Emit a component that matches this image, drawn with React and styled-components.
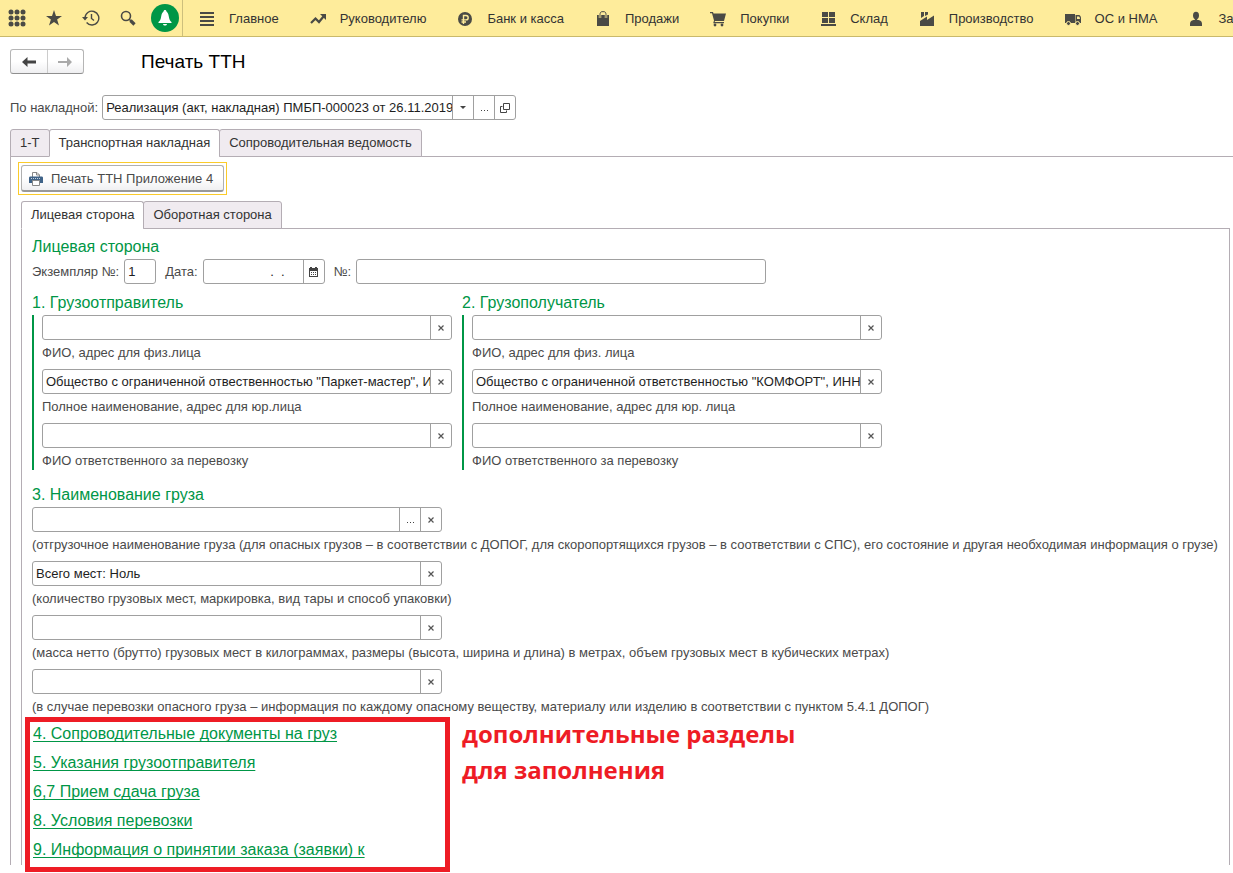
import React, { useState } from 'react';
import styled, { createGlobalStyle } from 'styled-components';

const GlobalStyle = createGlobalStyle`
  * {
    box-sizing: border-box;
  }
  body {
    margin: 0;
    background-color: #fff;
    color: #4a4a4a;
    font-family: 'Liberation Sans', Arial, sans-serif;
    font-size: 13px;
    line-height: 18px;
  }
  button,
  input {
    font: inherit;
    color: inherit;
  }
  button {
    padding: 0;
    cursor: pointer;
  }
`;

const Page = styled.div`
  padding-bottom: 9px;
  overflow-x: hidden;
`;

const TopBar = styled.header`
  display: flex;
  height: 37px;
  background-color: #feec9b;
  border-bottom: 1px solid #c9b96c;
  overflow: hidden;
`;

const Tools = styled.div`
  display: flex;
  flex: none;
  align-items: center;
  gap: 10px;
  padding: 0 3px;
  border-right: 1px solid #cdbf7c;
`;

const ToolButton = styled.button`
  display: flex;
  align-items: center;
  justify-content: center;
  width: ${(props) => (props.$round ? '28px' : '27px')};
  height: 28px;
  border: none;
  border-radius: 50%;
  background-color: ${(props) => (props.$round ? '#009646' : 'transparent')};
`;

const Menu = styled.nav`
  display: flex;
  align-items: center;
  gap: 31px;
  padding-top: 1px;
  padding-left: 16px;
`;

const MenuLink = styled.a`
  display: flex;
  flex: none;
  align-items: center;
  gap: 14px;
  color: #333;
  text-decoration: none;
  white-space: nowrap;
`;

const TitleRow = styled.div`
  display: flex;
  align-items: center;
  gap: 57px;
  padding: 12px 10px 0;
`;

const History = styled.div`
  display: flex;
  width: 74px;
  height: 25px;
  border: 1px solid #b5b5b5;
  border-bottom-color: #8f8f8f;
  border-radius: 3px;
  background: linear-gradient(#fff 50%, #efeff1);
`;

const HistoryButton = styled.button`
  display: flex;
  flex: 1;
  align-items: center;
  justify-content: center;
  border: none;
  background-color: transparent;
  & + & {
    border-left: 1px solid #ccc;
  }
`;

const Title = styled.h1`
  margin: 0;
  color: #000;
  font-size: 19px;
  font-weight: 400;
  line-height: 24px;
`;

const DocumentRow = styled.div`
  display: flex;
  align-items: center;
  gap: 4px;
  padding: 21px 10px 9px;
`;

const Field = styled.div`
  display: flex;
  flex: none;
  width: ${(props) => props.$width || '410px'};
  max-width: 100%;
  height: 25px;
  border: 1px solid #a0a0a0;
  border-radius: 3px;
  background-color: #fff;
`;

const Input = styled.input`
  flex: 1;
  min-width: 0;
  padding: 0 ${(props) => (props.$date ? '18px' : '0')} 0 3px;
  border: none;
  outline: none;
  background-color: transparent;
  color: #1e1e1e;
  text-align: ${(props) => (props.$date ? 'right' : 'left')};
`;

const FieldButton = styled.button`
  display: flex;
  flex: none;
  align-items: center;
  justify-content: center;
  width: 21px;
  border: none;
  border-left: 1px solid #a0a0a0;
  background-color: transparent;
`;

const Tabs = styled.div`
  display: flex;
  height: 28px;
  margin-bottom: -1px;
`;

const Tab = styled.button`
  padding: 0 9px;
  border: 1px solid #b4adb4;
  border-bottom-color: ${(props) => (props.$active ? '#fff' : '#b4adb4')};
  border-radius: 3px 3px 0 0;
  background-color: ${(props) => (props.$active ? '#fff' : '#f0ebf0')};
  color: #333;
  white-space: nowrap;
  & + & {
    margin-left: -1px;
  }
`;

const TabArea = styled.div`
  padding-left: 10px;
`;

const Panel = styled.main`
  padding: 5px 3px 0 7px;
  border-top: 1px solid #b4adb4;
  border-left: 1px solid #b4adb4;
`;

const Highlight = styled.div`
  display: inline-flex;
  padding: 2px;
  border: 1px solid #fbcb2b;
`;

const PrintButton = styled.button`
  display: flex;
  align-items: center;
  gap: 8px;
  height: 27px;
  padding: 1px 10px 0 7px;
  border: 1px solid #b0b0b0;
  border-bottom: 2px solid #999;
  border-radius: 3px;
  background: linear-gradient(#fff 50%, #f0f0f2);
  white-space: nowrap;
`;

const InnerArea = styled.section`
  padding: 6px 0 0 3px;
`;

const InnerPanel = styled.div`
  padding: 8px 10px 5px;
  border: 1px solid #b4adb4;
  border-bottom: none;
`;

const Heading = styled.h2`
  margin: 0 0 2px;
  color: #009646;
  font-size: 16px;
  font-weight: 400;
  line-height: 20px;
`;

const FormRow = styled.div`
  display: flex;
  align-items: center;
  margin-bottom: 9px;
`;

const InlineField = styled.div`
  display: flex;
  align-items: center;
  gap: 5px;
  margin-right: 9px;
`;

const Parties = styled.div`
  display: flex;
  gap: 10px;
  margin-bottom: 15px;
`;

const PartyFields = styled.div`
  padding-left: 8px;
  border-left: 2px solid #009646;
`;

const Stack = styled.div`
  display: flex;
  flex-direction: column;
  gap: 7px;
`;

const Hint = styled.label`
  display: block;
  margin-top: 4px;
  white-space: nowrap;
`;

const Sections = styled.div`
  position: relative;
  display: flex;
  flex-direction: column;
  align-items: flex-start;
  gap: 9px;
  margin-top: 8px;
  padding-left: 1px;
`;

const SectionLink = styled.a`
  color: #009646;
  font-size: 16px;
  line-height: 20px;
  text-decoration: underline;
  text-decoration-skip-ink: none;
  text-underline-offset: 2px;
`;

const Frame = styled.div`
  position: absolute;
  top: -7px;
  bottom: -12px;
  left: -7px;
  width: 425px;
  border: 5px solid #ee1c25;
  pointer-events: none;
`;

const Note = styled.p`
  position: absolute;
  top: -8px;
  left: 430px;
  margin: 0;
  color: #ee1c25;
  font-family: 'Open Sans', 'Noto Sans', sans-serif;
  font-size: 24px;
  font-weight: 700;
  line-height: 36px;
  white-space: nowrap;
`;

const Svg = ({ size = 16, children }) => (
  <svg width={size} height={size} viewBox={`0 0 ${size} ${size}`} fill="#4a4a45" aria-hidden="true">
    {children}
  </svg>
);

const GridIcon = () => (
  <Svg size={18}>
    {[3, 9, 15].map((y) => [3, 9, 15].map((x) => <circle key={`${x}-${y}`} cx={x} cy={y} r="2.5" />))}
  </Svg>
);

const StarIcon = () => (
  <Svg size={16}>
    <path d="M8 0l2 5.9h6l-4.900 3.700 1.900 6L8 12l-5 3.600 1.900-6L0 5.900h6z" />
  </Svg>
);

const HistoryIcon = () => (
  <Svg size={18}>
    <path d="M3 9a6.900 6.900 0 1 1 1.600 4.500" fill="none" stroke="#4a4a45" strokeWidth="1.400" />
    <path d="M0 8h6L3 11.500z" />
    <path d="M9.500 5v4.500l2.500 2" fill="none" stroke="#4a4a45" strokeWidth="1.400" />
  </Svg>
);

const SearchIcon = () => (
  <Svg size={16}>
    <circle cx="6" cy="6" r="4.500" fill="none" stroke="#4a4a45" strokeWidth="1.600" />
    <path d="M9 9l2 2" stroke="#4a4a45" strokeWidth="1.600" />
    <path d="M10.500 10.500l4 4" stroke="#4a4a45" strokeWidth="3.200" />
  </Svg>
);

const BellIcon = () => (
  <Svg size={16}>
    <path
      fill="#fff"
      d="M8 0c.9 0 1.400.6 1.500 1.500C11.200 2.800 11.600 5 12 7.500c.4 2.300 1.200 3.500 2.500 4.500v1h-13v-1C2.800 11 3.600 9.800 4 7.500c.4-2.500.8-4.700 2.500-6C6.600.6 7.100 0 8 0zM6 14h4c-.2 1-1 1.500-2 1.500S6.200 15 6 14z"
    />
  </Svg>
);

const MainIcon = () => (
  <Svg>
    <path d="M1 1h14v2H1zM1 5h14v2H1zM1 9h14v2H1zM1 13h14v2H1z" />
  </Svg>
);

const TrendIcon = () => (
  <Svg>
    <path d="M1 12l4.500-4.500L9 11l4.500-5.500" fill="none" stroke="#4a4a45" strokeWidth="2.200" />
    <path d="M10 3h6v6z" />
  </Svg>
);

const RubleIcon = () => (
  <Svg>
    <circle cx="8" cy="8" r="7" />
    <path d="M6.500 13V4.500H9a2.200 2.200 0 0 1 0 4.400H4.500M4.500 11H9" fill="none" stroke="#feec9b" strokeWidth="1.400" />
  </Svg>
);

const BagIcon = () => (
  <Svg>
    <path d="M2 4h12v11H2z" />
    <path d="M5 7V3.500C5 1.500 6 .7 7 .7h2c1 0 2 .8 2 2.800V7" fill="none" stroke="#feec9b" strokeWidth="2.400" />
    <path d="M5 7V3.500C5 1.500 6 .7 7 .7h2c1 0 2 .8 2 2.800V7" fill="none" stroke="#4a4a45" />
  </Svg>
);

const CartIcon = () => (
  <Svg>
    <path d="M0 1h3l.5 1.500H16L14 10H5l-.4 1H14v1.300H3.200L4 9.500 2 2.300H0z" />
    <circle cx="5" cy="14" r="1.400" />
    <circle cx="12" cy="14" r="1.400" />
  </Svg>
);

const StoreIcon = () => (
  <Svg>
    <path d="M2 1h6v5H2zM9 1h6v5H9zM2 7h6v5H2zM9 7h6v5H9zM1 13h15v2H1z" />
  </Svg>
);

const FactoryIcon = () => (
  <Svg>
    <path d="M1 15V10l7-4.500V9l7-4.500V15z" />
    <path d="M2 1h3v4L2 7zM6 1h3v2.500L6 5z" />
  </Svg>
);

const TruckIcon = () => (
  <Svg>
    <path d="M0 3h10v9H0zM10.500 4h3.500c1 0 2 1.500 2 3v5h-5.500z" />
    <path d="M12 5.500h2c.6.600 1 1.500 1 2.500h-3z" fill="#feec9b" />
    <circle cx="3.500" cy="12.500" r="2" stroke="#feec9b" />
    <circle cx="12.500" cy="12.500" r="2" stroke="#feec9b" />
  </Svg>
);

const PersonIcon = () => (
  <Svg>
    <ellipse cx="8" cy="4.500" rx="3" ry="3.700" />
    <path d="M5.500 9h5c2.300.5 3.500 1.700 3.500 4v2H2v-2c0-2.300 1.200-3.500 3.500-4z" />
    <path d="M6.800 7h2.400v3H6.800z" />
  </Svg>
);

const ArrowIcon = ({ forward }) => (
  <svg width="14" height="10" viewBox="0 0 14 10" fill={forward ? '#aaa' : '#444'} aria-hidden="true">
    <path d={forward ? 'M0 4h9V0l5 5-5 5V6H0z' : 'M14 3.500H5.500V0L0 5l5.500 5V6.500H14z'} />
  </svg>
);

const PrinterIcon = () => (
  <Svg size={14}>
    <path d="M3.500 5V.5h4.500l2.500 2.500v2" fill="#fff" stroke="#888" />
    <path d="M7.500.5V3h3" fill="none" stroke="#888" />
    <path d="M0 6c0-1 .5-1.500 1.500-1.500h11c1 0 1.500.5 1.500 1.500v5H0z" fill="#3f6388" />
    <path d="M2 6.500h10" stroke="#c5d3e0" strokeDasharray="1 1" />
    <path d="M3.500 8.500h7v5h-7z" fill="#fff" stroke="#888" />
  </Svg>
);

const DropIcon = () => (
  <svg width="6" height="3" viewBox="0 0 6 3" fill="#444" aria-hidden="true">
    <path d="M0 0h6L3 3z" />
  </svg>
);

const DotsIcon = () => (
  <svg width="9" height="9" viewBox="0 0 9 9" fill="#444" aria-hidden="true">
    <path d="M1 7h1v1H1zM4 7h1v1H4zM7 7h1v1H7z" />
  </svg>
);

const OpenIcon = () => (
  <svg width="10" height="10" viewBox="0 0 10 10" fill="none" stroke="#444" aria-hidden="true">
    <path d="M3.500.5h6v6h-6zM2.500 3.500h-2v6h6v-2" />
  </svg>
);

const ClearIcon = () => (
  <svg width="6" height="6" viewBox="0 0 6 6" fill="none" stroke="#555" strokeWidth="1.200" aria-hidden="true">
    <path d="M.5.5l5 5M5.500.5l-5 5" />
  </svg>
);

const CalendarIcon = () => (
  <svg width="9" height="10" viewBox="0 0 9 10" fill="#444" aria-hidden="true">
    <path d="M1 0h2v1h3V0h2v1h1v9H0V1h1zM1 4v5h7V4z" fillRule="evenodd" />
    <path d="M2 5h1v1H2zM4 5h1v1H4zM6 5h1v1H6zM2 7h1v1H2zM4 7h1v1H4zM6 7h1v1H6z" />
  </svg>
);

const menu = [
  { name: 'Главное', Icon: MainIcon },
  { name: 'Руководителю', Icon: TrendIcon },
  { name: 'Банк и касса', Icon: RubleIcon },
  { name: 'Продажи', Icon: BagIcon },
  { name: 'Покупки', Icon: CartIcon },
  { name: 'Склад', Icon: StoreIcon },
  { name: 'Производство', Icon: FactoryIcon },
  { name: 'ОС и НМА', Icon: TruckIcon },
  { name: 'За', Icon: PersonIcon },
];

const parties = [
  {
    title: '1. Грузоотправитель',
    fields: [
      { id: 'sender-person', hint: 'ФИО, адрес для физ.лица' },
      {
        id: 'sender-company',
        hint: 'Полное наименование, адрес для юр.лица',
        value: 'Общество с ограниченной отвественностью "Паркет-мастер", ИНН',
      },
      { id: 'sender-manager', hint: 'ФИО ответственного за перевозку' },
    ],
  },
  {
    title: '2. Грузополучатель',
    fields: [
      { id: 'receiver-person', hint: 'ФИО, адрес для физ. лица' },
      {
        id: 'receiver-company',
        hint: 'Полное наименование, адрес для юр. лица',
        value: 'Общество с ограниченной ответственностью "КОМФОРТ", ИНН',
      },
      { id: 'receiver-manager', hint: 'ФИО ответственного за перевозку' },
    ],
  },
];

const cargo = [
  {
    id: 'cargo-name',
    select: true,
    hint: '(отгрузочное наименование груза (для опасных грузов – в соответствии с ДОПОГ, для скоропортящихся грузов – в соответствии с СПС), его состояние и другая необходимая информация о грузе)',
  },
  {
    id: 'cargo-places',
    value: 'Всего мест: Ноль',
    hint: '(количество грузовых мест, маркировка, вид тары и способ упаковки)',
  },
  {
    id: 'cargo-mass',
    hint: '(масса нетто (брутто) грузовых мест в килограммах, размеры (высота, ширина и длина) в метрах, объем грузовых мест в кубических метрах)',
  },
  {
    id: 'cargo-danger',
    hint: '(в случае перевозки опасного груза – информация по каждому опасному веществу, материалу или изделию в соответствии с пунктом 5.4.1 ДОПОГ)',
  },
];

const sections = [
  '4. Сопроводительные документы на груз',
  '5. Указания грузоотправителя',
  '6,7 Прием сдача груза',
  '8. Условия перевозки',
  '9. Информация о принятии заказа (заявки) к',
];

function HintedField({ id, value: initial = '', hint, select }) {
  const [value, setValue] = useState(initial);

  return (
    <div>
      <Field>
        <Input id={id} value={value} onChange={(e) => setValue(e.target.value)} />
        {select && (
          <FieldButton type="button" aria-label="Выбрать">
            <DotsIcon />
          </FieldButton>
        )}
        <FieldButton type="button" aria-label="Очистить" onClick={() => setValue('')}>
          <ClearIcon />
        </FieldButton>
      </Field>
      <Hint htmlFor={id}>{hint}</Hint>
    </div>
  );
}

function App() {
  return (
    <Page>
      <GlobalStyle />
      <TopBar>
        <Tools>
          <ToolButton aria-label="Меню">
            <GridIcon />
          </ToolButton>
          <ToolButton aria-label="Избранное">
            <StarIcon />
          </ToolButton>
          <ToolButton aria-label="История">
            <HistoryIcon />
          </ToolButton>
          <ToolButton aria-label="Поиск">
            <SearchIcon />
          </ToolButton>
          <ToolButton $round aria-label="Оповещения">
            <BellIcon />
          </ToolButton>
        </Tools>
        <Menu>
          {menu.map(({ name, Icon }) => (
            <MenuLink key={name} href="#">
              <Icon />
              {name}
            </MenuLink>
          ))}
        </Menu>
      </TopBar>

      <TitleRow>
        <History>
          <HistoryButton aria-label="Назад">
            <ArrowIcon />
          </HistoryButton>
          <HistoryButton aria-label="Вперед">
            <ArrowIcon forward />
          </HistoryButton>
        </History>
        <Title>Печать ТТН</Title>
      </TitleRow>

      <DocumentRow>
        <label htmlFor="document">По накладной:</label>
        <Field $width="414px">
          <Input id="document" defaultValue="Реализация (акт, накладная) ПМБП-000023 от 26.11.2019" />
          <FieldButton aria-label="Список">
            <DropIcon />
          </FieldButton>
          <FieldButton aria-label="Выбрать">
            <DotsIcon />
          </FieldButton>
          <FieldButton aria-label="Открыть">
            <OpenIcon />
          </FieldButton>
        </Field>
      </DocumentRow>

      <TabArea>
        <Tabs>
          <Tab>1-Т</Tab>
          <Tab $active>Транспортная накладная</Tab>
          <Tab>Сопроводительная ведомость</Tab>
        </Tabs>
        <Panel>
          <Highlight>
            <PrintButton>
              <PrinterIcon />
              Печать ТТН Приложение 4
            </PrintButton>
          </Highlight>

          <InnerArea>
            <Tabs>
              <Tab $active>Лицевая сторона</Tab>
              <Tab>Оборотная сторона</Tab>
            </Tabs>
            <InnerPanel>
              <Heading>Лицевая сторона</Heading>
              <FormRow>
                <InlineField>
                  <label htmlFor="copy">Экземпляр №:</label>
                  <Field $width="32px">
                    <Input id="copy" defaultValue="1" />
                  </Field>
                </InlineField>
                <InlineField>
                  <label htmlFor="date">Дата:</label>
                  <Field $width="122px">
                    <Input id="date" $date defaultValue=".  ." />
                    <FieldButton aria-label="Календарь">
                      <CalendarIcon />
                    </FieldButton>
                  </Field>
                </InlineField>
                <InlineField>
                  <label htmlFor="number">№:</label>
                  <Field>
                    <Input id="number" />
                  </Field>
                </InlineField>
              </FormRow>

              <Parties>
                {parties.map((party) => (
                  <div key={party.title}>
                    <Heading>{party.title}</Heading>
                    <PartyFields>
                      <Stack>
                        {party.fields.map((field) => (
                          <HintedField key={field.id} {...field} />
                        ))}
                      </Stack>
                    </PartyFields>
                  </div>
                ))}
              </Parties>

              <Heading>3. Наименование груза</Heading>
              <Stack>
                {cargo.map((field) => (
                  <HintedField key={field.id} {...field} />
                ))}
              </Stack>

              <Sections>
                {sections.map((name) => (
                  <SectionLink key={name} href="#">
                    {name}
                  </SectionLink>
                ))}
                <Frame />
                <Note>
                  дополнительные разделы
                  <br />
                  для заполнения
                </Note>
              </Sections>
            </InnerPanel>
          </InnerArea>
        </Panel>
      </TabArea>
    </Page>
  );
}

export default App;
